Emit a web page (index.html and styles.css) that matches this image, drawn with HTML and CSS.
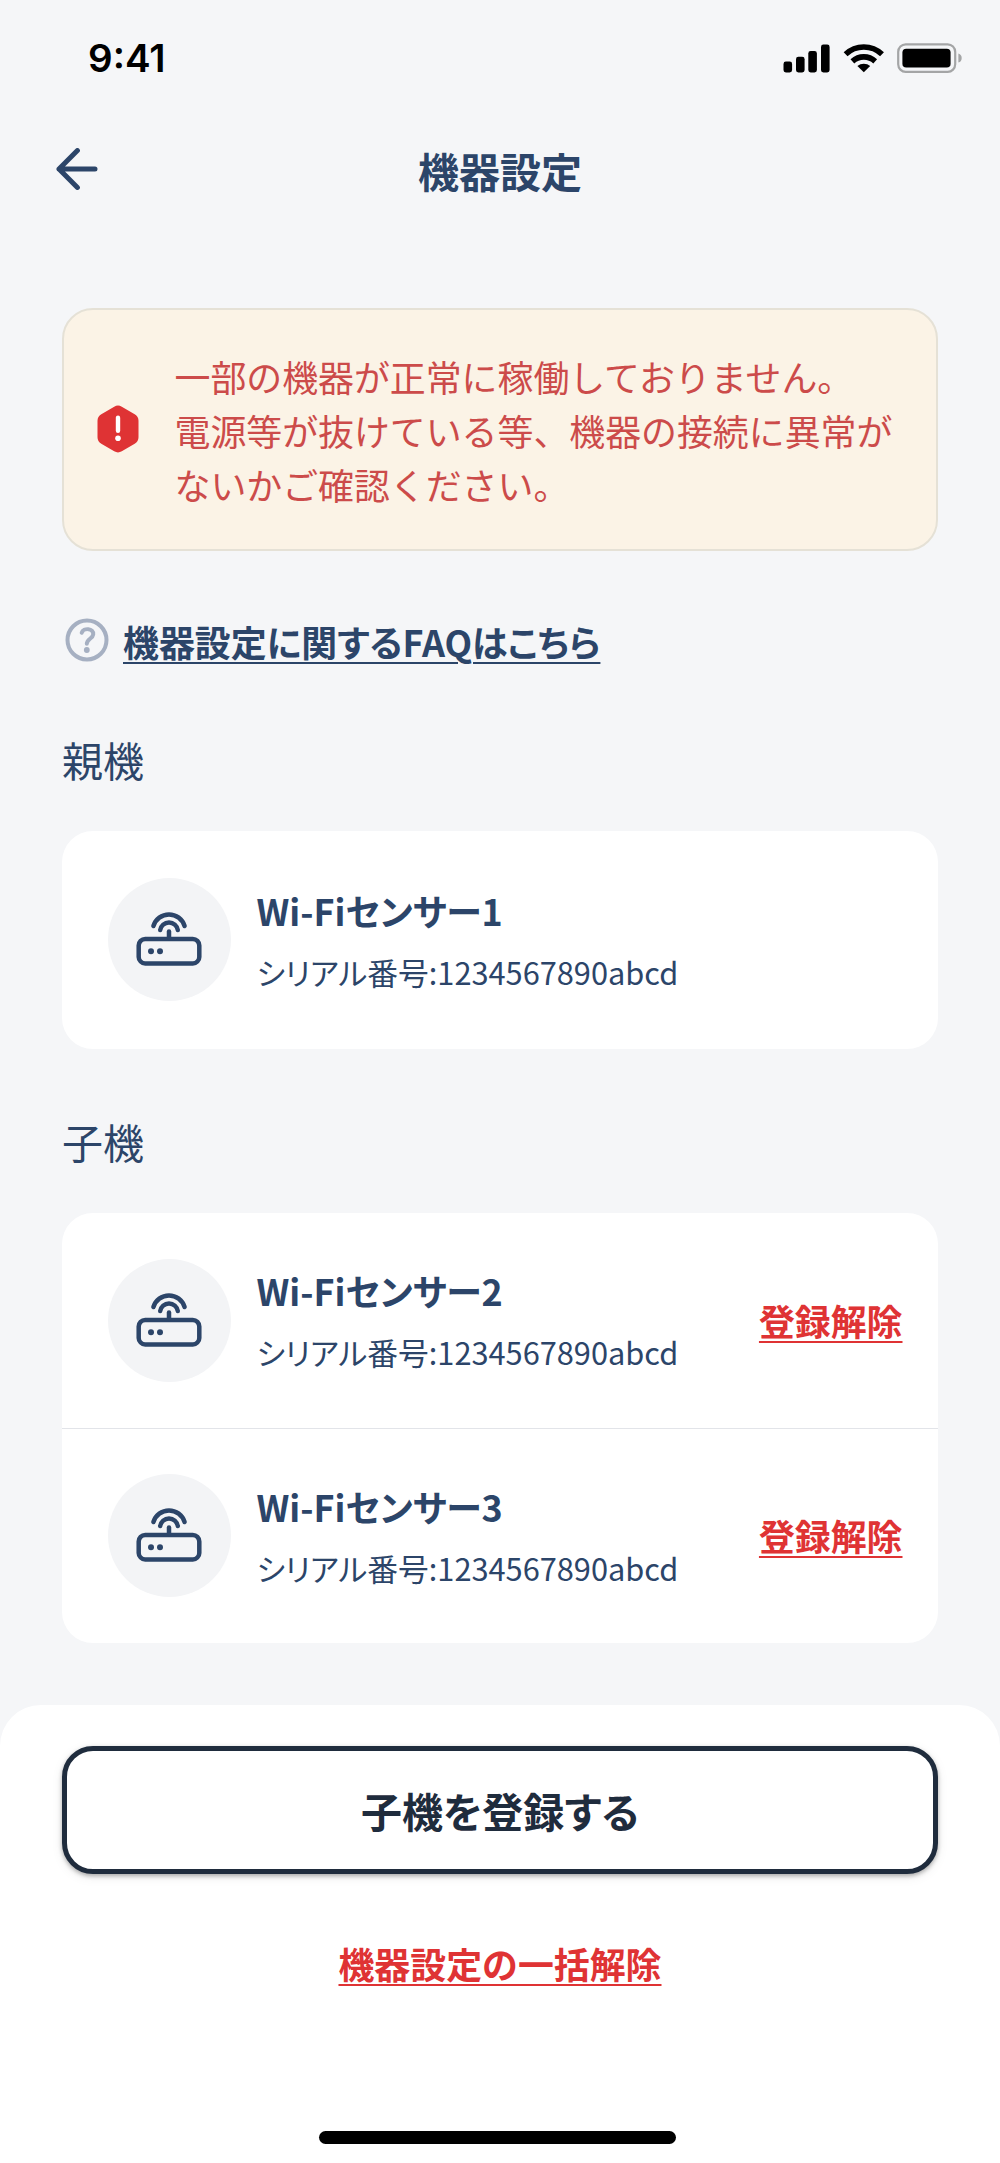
FILE: index.html
```
<!DOCTYPE html>
<html lang="ja">

<head>
    <meta charset="UTF-8">
    <meta name="viewport" content="width=device-width, initial-scale=1.0">
    <title>機器設定</title>
    <link rel="stylesheet" href="styles.css">
</head>

<body>
    <svg class="sprite" xmlns="http://www.w3.org/2000/svg">
        <symbol id="router" viewBox="0 0 66 54">
            <g fill="none" stroke="currentColor" stroke-width="4.5" stroke-linecap="round">
                <rect x="2.7" y="27" width="60.6" height="24.4" rx="6.5" />
                <path d="M33 26V19.5" />
                <path d="M24.2 18a8.9 8.9 0 0 1 17.6 0" />
                <path d="M17.4 14a16.3 16.3 0 0 1 31.2 0" />
            </g>
            <circle cx="15" cy="39.2" r="3" fill="currentColor" />
            <circle cx="24" cy="39.2" r="3" fill="currentColor" />
        </symbol>
    </svg>

    <div class="status-bar">
        <span class="time">9:41</span>
        <div class="status-icons">
            <svg width="47" height="30" viewBox="0 0 47 30">
                <rect x="0.5" y="18.5" width="8.6" height="11" rx="2.4" />
                <rect x="13" y="13.8" width="8.6" height="15.7" rx="2.4" />
                <rect x="25.3" y="8" width="8.6" height="21.5" rx="2.4" />
                <rect x="38" y="1.6" width="8.6" height="27.9" rx="2.4" />
            </svg>
            <svg width="42" height="30" viewBox="0 0 42 30">
                <g fill="none" stroke="#000" stroke-width="5.6">
                    <path d="M2.6 11.3a26.5 26.5 0 0 1 36.4 0" />
                    <path d="M9.4 18.3a17 17 0 0 1 22.8 0" />
                </g>
                <path d="M14.4 23.1a9.6 9.6 0 0 1 12.8 0L20.8 29.3z" />
            </svg>
            <svg width="66" height="30" viewBox="0 0 66 30">
                <rect x="1.2" y="1.4" width="57" height="27.4" rx="7.5" fill="none" stroke="#a4a5a6" stroke-width="2.2" />
                <rect x="5.4" y="5.8" width="48.2" height="18.8" rx="3.8" />
                <path d="M61.4 10.4c4.4 1.2 4.4 8 0 9.2z" fill="#a4a5a6" />
            </svg>
        </div>
    </div>

    <header>
        <a class="back" title="戻る">
            <svg width="42" height="42" viewBox="0 0 42 42" fill="none" stroke="currentColor" stroke-width="5" stroke-linecap="round" stroke-linejoin="round">
                <path d="M39 21H3M21.4 2.6L3 21l18.4 18.4" />
            </svg>
        </a>
        <h1>機器設定</h1>
    </header>

    <main>
        <div class="alert">
            <svg width="42" height="48" viewBox="0 0 42 48">
                <path d="M17.2 1.7q3.8-2.2 7.6 0l12.9 7.5q3.8 2.2 3.8 6.6v16.4q0 4.4-3.8 6.6l-12.9 7.5q-3.8 2.2-7.6 0L4.3 38.8Q.5 36.6.5 32.2V15.8Q.5 11.4 4.3 9.2z" fill="#df3334" />
                <path d="M21 12.8v13" stroke="#fff" stroke-width="4.4" stroke-linecap="round" />
                <circle cx="21" cy="33.2" r="2.8" fill="#fff" />
            </svg>
            <p>一部の機器が正常に稼働しておりません。<br>電源等が抜けている等、機器の接続に異常がないかご確認ください。</p>
        </div>

        <div class="faq">
            <svg width="44" height="44" viewBox="0 0 44 44" fill="none" stroke="currentColor" stroke-linecap="round" stroke-linejoin="round">
                <circle cx="22" cy="22" r="19.5" stroke-width="4" />
                <path d="M16.7 14.8c1.5-5.4 12.3-4.8 11.5 1.6-.5 4.2-6.4 4.8-6.4 9.4" stroke-width="4" />
                <circle cx="21.8" cy="32" r="2.9" fill="currentColor" stroke="none" />
            </svg>
            <a>機器設定に関するFAQはこちら</a>
        </div>

        <h2>親機</h2>
        <div class="card">
            <div class="device single">
                <div class="icon"><svg><use href="#router" /></svg></div>
                <div class="info">
                    <div class="name">Wi-Fiセンサー1</div>
                    <div class="serial">シリアル番号:1234567890abcd</div>
                </div>
            </div>
        </div>

        <h2>子機</h2>
        <div class="card">
            <div class="device">
                <div class="icon"><svg><use href="#router" /></svg></div>
                <div class="info">
                    <div class="name">Wi-Fiセンサー2</div>
                    <div class="serial">シリアル番号:1234567890abcd</div>
                </div>
                <a class="danger">登録解除</a>
            </div>
            <div class="device">
                <div class="icon"><svg><use href="#router" /></svg></div>
                <div class="info">
                    <div class="name">Wi-Fiセンサー3</div>
                    <div class="serial">シリアル番号:1234567890abcd</div>
                </div>
                <a class="danger">登録解除</a>
            </div>
        </div>
    </main>

    <footer>
        <button>子機を登録する</button>
        <a class="danger">機器設定の一括解除</a>
        <div class="home-indicator"></div>
    </footer>
</body>

</html>
```

FILE: styles.css
```
* {
    box-sizing: border-box;
}

body {
    margin: 0;
    height: 2163px;
    display: flex;
    flex-direction: column;
    background-color: #f5f6f8;
    color: #2c4569;
    font-family: "Noto Sans CJK JP", sans-serif;
    font-size: 35.9px;
    line-height: 54px;
}

h1,
h2,
p {
    margin: 0;
}

svg {
    display: block;
    flex-shrink: 0;
}

.sprite {
    display: none;
}

.status-bar {
    height: 113px;
    padding: 3px 37px 0 88px;
    display: flex;
    align-items: center;
    justify-content: space-between;
    color: #000;
}

.time {
    font-family: Inter, sans-serif;
    font-size: 38.5px;
    font-weight: 600;
}

.status-icons {
    display: flex;
    gap: 12.5px;
}

header {
    height: 114px;
    padding: 0 56px;
    display: grid;
    grid-template-columns: 42px 1fr 42px;
    align-items: center;
}

.back {
    padding-bottom: 3px;
}

h1 {
    font-size: 41px;
    line-height: 62px;
    text-align: center;
}

main {
    flex: 1;
    padding: 80.5px 62px 0;
}

.alert {
    height: 243px;
    padding: 0 33px;
    display: flex;
    align-items: center;
    gap: 35.5px;
    background-color: #fbf3e6;
    border: 2px solid #e5e1d6;
    border-radius: 31px;
    color: #cc4b4a;
}

.alert p {
    flex: 1;
    padding-top: 2px;
}

.faq {
    margin-top: 63px;
    padding-left: 3px;
    display: flex;
    gap: 14px;
}

.faq svg {
    margin-top: 4px;
    color: #a6b0c2;
}

.faq a,
.info,
button {
    font-feature-settings: "palt";
}

.faq a,
.danger {
    font-weight: 700;
    text-decoration: underline;
    text-decoration-thickness: 2px;
    text-underline-offset: 5px;
}

.danger {
    color: #df3334;
}

h2 {
    margin: 60px 0 41px;
    font-size: 41px;
    font-weight: 400;
    line-height: 62px;
}

.card + h2 {
    margin-top: 61px;
}

.card {
    background-color: #fff;
    border-radius: 31px;
}

.device {
    height: 215px;
    padding: 0 35.5px 0 45.5px;
    display: flex;
    align-items: center;
}

.device.single {
    height: 218px;
}

.device + .device {
    border-top: 1px solid #e2e4e9;
}

.device .danger {
    padding-bottom: 1px;
}

.icon {
    width: 123px;
    height: 123px;
    display: flex;
    align-items: center;
    justify-content: center;
    background-color: #f3f4f6;
    border-radius: 50%;
}

.icon svg {
    width: 66px;
    height: 54px;
    margin-bottom: 1px;
}

.info {
    flex: 1;
    padding-bottom: 2px;
    margin-left: 26px;
}

.name {
    font-weight: 700;
}

.serial {
    margin-top: 12px;
    font-size: 30.75px;
    line-height: 46px;
}

footer {
    height: 458px;
    padding: 41px 62px 19.5px;
    display: flex;
    flex-direction: column;
    align-items: center;
    background-color: #fff;
    border-radius: 41px 41px 0 0;
}

button {
    width: 100%;
    height: 128px;
    margin-bottom: 62px;
    background-color: #fff;
    border: 5px solid #1f2c3d;
    border-radius: 31px;
    box-shadow: 0 2px 4px rgba(0, 0, 0, .3), 0 3px 12px rgba(0, 0, 0, .08);
    color: #1f2c3d;
    font-family: inherit;
    font-size: 41px;
    font-weight: 700;
}

.home-indicator {
    width: 357px;
    height: 13px;
    margin-top: auto;
    margin-right: 5px;
    background-color: #000;
    border-radius: 7px;
}
```
